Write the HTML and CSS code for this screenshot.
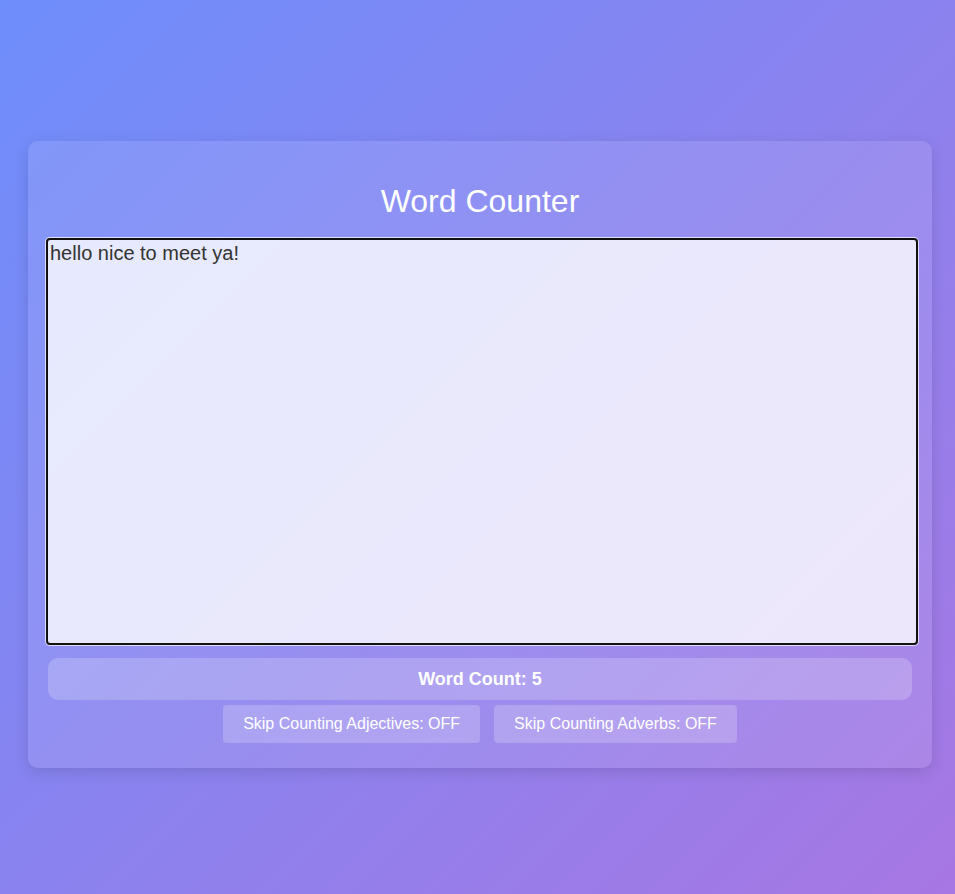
FILE: index.html
```html
<!DOCTYPE html>
<html lang="en">
<head>
<meta charset="utf-8">
<title>Word Counter</title>
<link rel="stylesheet" href="styles.css">
</head>
<body>
<div class="card">
  <h1 class="title">Word Counter</h1>
  <textarea class="input" spellcheck="false">hello nice to meet ya!</textarea>
  <div class="count">Word Count: 5</div>
  <div class="buttons">
    <button class="toggle">Skip Counting Adjectives: OFF</button>
    <button class="toggle">Skip Counting Adverbs: OFF</button>
  </div>
</div>
</body>
</html>
```

FILE: styles.css
```css
html, body {
  margin: 0;
  padding: 0;
}
body {
  height: 894px;
  box-sizing: border-box;
  padding-left: 28px;
  display: flex;
  align-items: center;
  font-family: "Liberation Sans", Arial, sans-serif;
  background: linear-gradient(135deg, #6e8efb, #a777e3);
  overflow: hidden;
}
.card {
  width: 904px;
  box-sizing: border-box;
  padding: 20px;
  margin-top: 15px;
  border-radius: 10px;
  background: rgba(255, 255, 255, 0.1);
  box-shadow: 0 4px 15px rgba(0, 0, 0, 0.12);
  text-align: center;
}
.title {
  margin: 22px 0 20px;
  font-size: 32px;
  font-weight: normal;
  line-height: 37px;
  color: #fff;
}
.input {
  display: block;
  width: 868px;
  height: 403px;
  box-sizing: border-box;
  margin: 0 0 15px 0;
  padding: 2px;
  border: none;
  border-radius: 2px;
  outline: 2px solid #111;
  box-shadow: 0 0 0 3px rgba(255, 255, 255, 0.7);
  background: rgba(255, 255, 255, 0.8);
  font-family: "Liberation Sans", Arial, sans-serif;
  font-size: 20px;
  line-height: 23px;
  color: #333;
  resize: none;
  text-align: left;
}
.count {
  padding: 10px;
  line-height: 22px;
  border-radius: 10px;
  background: rgba(255, 255, 255, 0.2);
  font-size: 18px;
  font-weight: bold;
  color: #fff;
}
.buttons {
  display: flex;
  justify-content: center;
  gap: 14px;
  margin-top: 5px;
  margin-bottom: 5px;
}
.toggle {
  padding: 10px 20px;
  border: none;
  border-radius: 4px;
  background: rgba(255, 255, 255, 0.2);
  font-family: "Liberation Sans", Arial, sans-serif;
  font-size: 16px;
  line-height: 18px;
  color: #fff;
}
```
